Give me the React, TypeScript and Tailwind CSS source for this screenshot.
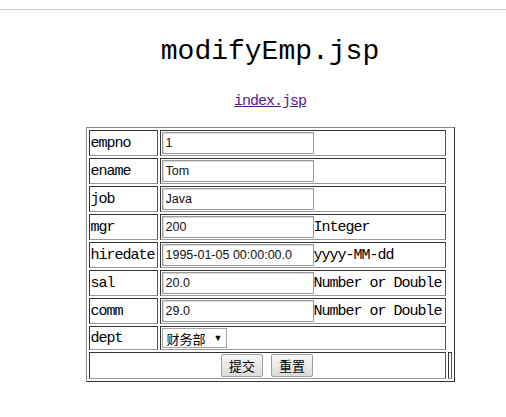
import React from "react";

const mono = { fontFamily: '"Liberation Mono", "Noto Sans CJK SC", monospace' };
const sans = { fontFamily: '"Liberation Sans", Arial, sans-serif' };
const cjk = { fontFamily: '"Noto Sans CJK SC", "Liberation Sans", sans-serif' };

const cell =
  "border border-t-[#333] border-l-[#333] border-r-[#555] border-b-[#999] p-[1px]";

function Row({ label, value, hint }: { label: string; value: string; hint?: string }) {
  return (
    <tr>
      <td className={`${cell} w-[69px] h-[26px] text-[15px] tracking-[-1px] leading-[15px] text-black whitespace-nowrap`} style={mono}>
        {label}
      </td>
      <td className={`${cell} w-[286px] h-[26px] text-[15px] tracking-[-1px] leading-[15px] text-black whitespace-nowrap`} style={mono}>
        <input
          readOnly
          defaultValue={value}
          className="inline-block w-[152px] h-[22px] border border-[#9a9a9a] shadow-[inset_1px_1px_0_#d8d8d8] px-[3px] text-[12.5px] tracking-normal text-[#111] bg-white outline-none align-baseline"
          style={sans}
        />
        {hint}
      </td>
    </tr>
  );
}

export default function App() {
  return (
    <div className="w-[506px] h-[417px] bg-white overflow-hidden">
      <div className="h-[9px]" />
      <div className="h-px w-[506px] bg-[#c8c8c8]" />
      <div className="w-[540px] flex flex-col items-center">
        <h1 className="mt-[28px] text-[28px] leading-[28px] font-normal text-black" style={mono}>
          modifyEmp.jsp
        </h1>
        <a
          href="#"
          className="mt-[28px] text-[15px] leading-[15px] tracking-[-1px] text-[#551a8b] underline"
          style={mono}
        >
          index.jsp
        </a>
        <table className="mt-[18px] border-separate border-spacing-[2px] border border-t-[#8a8a8a] border-l-[#8a8a8a] border-r-[#333] border-b-[#333]">
          <tbody>
            <Row label="empno" value="1" />
            <Row label="ename" value="Tom" />
            <Row label="job" value="Java" />
            <Row label="mgr" value="200" hint="Integer" />
            <Row label="hiredate" value="1995-01-05 00:00:00.0" hint="yyyy-MM-dd" />
            <Row label="sal" value="20.0" hint="Number or Double" />
            <Row label="comm" value="29.0" hint="Number or Double" />
            <tr>
              <td className={`${cell} h-[24px] text-[15px] tracking-[-1px] leading-[15px] text-black`} style={mono}>
                dept
              </td>
              <td className={`${cell} h-[24px]`}>
                <div className="flex items-center w-[65px] h-[20px] border border-[#a5a5a5] bg-white">
                  <span className="ml-[4px] text-[13px] leading-[13px] text-black" style={cjk}>
                    财务部
                  </span>
                  <span className="ml-[8px] text-[9px] leading-[9px] text-black" style={sans}>
                    ▼
                  </span>
                </div>
              </td>
            </tr>
            <tr>
              <td colSpan={2} className={`${cell} h-[27px]`}>
                <div className="flex justify-center gap-[8px]">
                  <button
                    className="w-[42px] h-[23px] border border-[#9f9f9f] rounded-[2px] bg-gradient-to-b from-[#f7f7f7] to-[#dcdcdc] text-[13px] leading-[13px] text-black"
                    style={cjk}
                  >
                    提交
                  </button>
                  <button
                    className="w-[42px] h-[23px] border border-[#9f9f9f] rounded-[2px] bg-gradient-to-b from-[#f7f7f7] to-[#dcdcdc] text-[13px] leading-[13px] text-black"
                    style={cjk}
                  >
                    重置
                  </button>
                </div>
              </td>
              <td className={`${cell} w-[4px] h-[27px]`}></td>
            </tr>
          </tbody>
        </table>
      </div>
    </div>
  );
}
